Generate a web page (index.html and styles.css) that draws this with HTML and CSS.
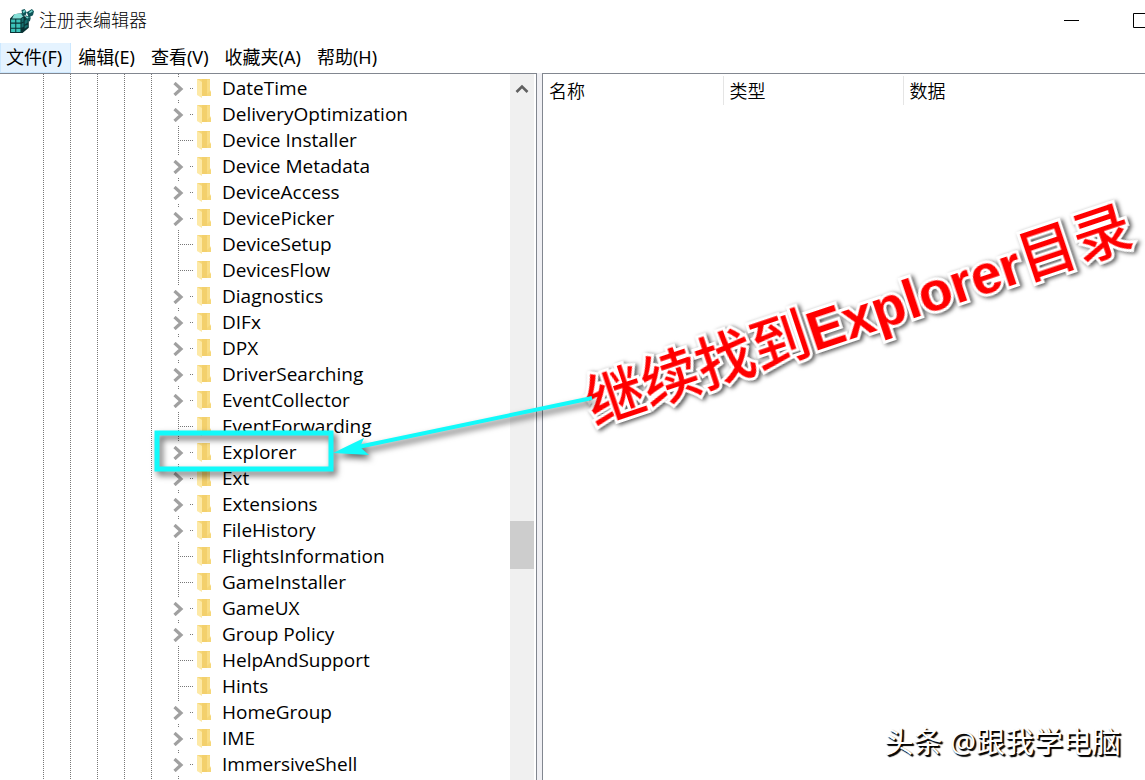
FILE: index.html
```html
<!DOCTYPE html>
<html lang="zh-CN">
<head>
<meta charset="utf-8">
<title>注册表编辑器</title>
<link rel="stylesheet" href="styles.css">
</head>
<body>
<svg class="defs" aria-hidden="true">
  <symbol id="chevron" viewBox="0 0 12 14"><path d="M1.500 1L8 7 1.500 13" fill="none" stroke="#a0a0a0" stroke-width="3.200"/></symbol>
  <symbol id="folder" viewBox="0 0 16 20">
    <path d="M1 1h13v11l1 2v4H5z" fill="#f6d778"/>
    <path d="M6 1h5v17H6z" fill="#f3d06c"/>
    <path d="M11 2h3v11l-3 3z" fill="#f9dd86"/>
    <path d="M1 1l5 3v16l-5-3z" fill="#fde9a6"/>
  </symbol>
</svg>
<div class="window">
  <header class="titlebar">
    <svg class="app-icon" viewBox="0 0 24 24" aria-hidden="true">
      <path d="M1 10l4-4 7-1 3 3 4 2v9l-6 5H1z" fill="#0a3335"/>
      <path d="M5 6l6-1 3 3-3 2H3z" fill="#86e0d8"/>
      <path d="M2 11h4v3H2zM7 11h4v3H7zM2 15h4v4H2zM7 15h4v4H7zM2 20h4v3H2zM7 20h4v3H7z" fill="#3cc4ba"/>
      <path d="M12 10l2-1v4l-2 1zM15 12l3-1v3l-3 2zM12 15l2-1v4l-2 1zM15 17l3-1v2l-3 2z" fill="#17706f"/>
      <path d="M12 2l3-1 2 3-1 3-3 1zM17 4l5-3 2 2-1 4-4 2zM16 7l5 2-1 4-4-2z" fill="#0f5558"/>
      <path d="M13 3l2-1 1 1-2 2zM19 4l3-2 1 1-3 2zM17 8l2 1-1 1-2-1z" fill="#6fd0c8"/>
    </svg>
    <h1 class="title">注册表编辑器</h1>
    <div class="window-buttons">
      <button class="window-button" aria-label="最小化"><svg width="16" height="16"><path d="M0 8.500h15" stroke="#000"/></svg></button>
      <button class="window-button" aria-label="最大化"><svg width="16" height="16"><path d="M.5 1.500h14v14H.5z" fill="none" stroke="#000"/></svg></button>
    </div>
  </header>
  <nav class="menubar">
    <button class="menu active">文件(F)</button>
    <button class="menu">编辑(E)</button>
    <button class="menu">查看(V)</button>
    <button class="menu">收藏夹(A)</button>
    <button class="menu">帮助(H)</button>
  </nav>
  <main class="panes">
    <section class="tree-pane">
      <ul class="tree" id="tree"></ul>
      <div class="scrollbar">
        <button class="scroll-up" aria-label="向上滚动"><svg width="14" height="10"><path d="M1.500 8L7 2.500 12.500 8" fill="none" stroke="#606060" stroke-width="2.600"/></svg></button>
        <div class="space-above"></div>
        <div class="thumb"></div>
        <div class="space-below"></div>
      </div>
    </section>
    <div class="splitter"></div>
    <section class="value-pane">
      <table class="values">
        <thead><tr><th class="fixed">名称</th><th class="fixed">类型</th><th>数据</th></tr></thead>
      </table>
    </section>
  </main>
  <p class="caption">继续找到<b>Explorer</b>目录</p>
  <svg class="marks" viewBox="0 0 460 90" aria-hidden="true">
    <rect x="7" y="43" width="174" height="36" fill="none" stroke="#12fafa" stroke-width="5"/>
    <path d="M208 57L442 8" stroke="#12fafa" stroke-width="4"/>
    <path d="M183 63L214 48 210 57 219 65z" fill="#12fafa"/>
  </svg>
  <p class="watermark">头条 @跟我学电脑</p>
</div>
<script src="tree.js"></script>
</body>
</html>
```
FILE: styles.css
```css
* { box-sizing: border-box; }
body, h1, p, ul { margin: 0; padding: 0; }
body {
  font-family: "Open Sans", "Noto Sans CJK SC", sans-serif;
  font-size: 18px;
  color: #000;
  background: #fff;
}
button {
  font: inherit;
  color: inherit;
  background: none;
  border: 0;
  padding: 0;
}
.defs { position: absolute; width: 0; height: 0; }
.window {
  position: relative;
  display: flex;
  flex-direction: column;
  height: 100vh;
  overflow: hidden;
}
.titlebar {
  display: flex;
  align-items: center;
  flex: none;
  height: 43px;
  padding: 0 0 3px 9px;
  gap: 5px;
}
.app-icon { width: 25px; height: 25px; }
.title { font-size: 18px; font-weight: 300; line-height: 26px; color: #000; }
.window-buttons { display: flex; margin-left: auto; margin-right: -30px; }
.window-button {
  display: flex;
  align-items: center;
  justify-content: center;
  width: 69px;
  height: 40px;
}
.menubar { display: flex; flex: none; height: 30px; }
.menu {
  padding: 0 7px 0 6px;
  border: 1px solid transparent;
  border-top: 0;
  font-family: "Noto Sans", "Noto Sans CJK SC", sans-serif;
  line-height: 27px;
  white-space: nowrap;
}
.menu.active { background: #e5f3ff; border-color: #cce8ff; padding: 0 8px 0 5px; }
.menu + .menu { padding-right: 8px; }
.panes { display: flex; flex: 1; min-height: 0; }
.tree-pane {
  display: flex;
  flex: 537 1 0;
  min-width: 0;
  border-top: 1px solid #828790;
  border-right: 1px solid #828790;
}
.tree {
  flex: 1;
  min-width: 0;
  padding-top: 1px;
  overflow: hidden;
  list-style: none;
  background-image:
    repeating-linear-gradient(#777 0 1px, transparent 1px 2px),
    repeating-linear-gradient(#777 0 1px, transparent 1px 2px),
    repeating-linear-gradient(#777 0 1px, transparent 1px 2px),
    repeating-linear-gradient(#777 0 1px, transparent 1px 2px),
    repeating-linear-gradient(#777 0 1px, transparent 1px 2px),
    repeating-linear-gradient(#777 0 1px, transparent 1px 2px);
  background-size: 1px 100%;
  background-position: 43px 0, 70px 0, 97px 0, 124px 0, 151px 0, 178px 0;
  background-repeat: no-repeat;
}
.node {
  display: flex;
  align-items: center;
  height: 26px;
  padding-left: 173px;
  font-size: 19px;
  line-height: 26px;
  white-space: nowrap;
}
.expander { width: 12px; height: 22px; margin-right: 5px; background: #fff; }
.expander svg { display: block; width: 12px; height: 14px; margin-top: 2px; }
.connector {
  width: 3px;
  height: 1px;
  background: repeating-linear-gradient(90deg, #777 0 1px, transparent 1px 2px);
}
.leaf .connector { width: 15px; margin-left: 5px; }
.folder { width: 16px; height: 20px; margin: 0 10px 0 3px; }
.scrollbar {
  display: flex;
  flex-direction: column;
  width: 24px;
  margin-right: 2px;
  background: #f0f0f0;
}
.scroll-up { height: 30px; }
.scroll-up svg { display: block; margin: 0 auto; }
.space-above { flex: 417; }
.thumb { height: 48px; background: #cdcdcd; }
.space-below { flex: 211; }
.splitter { width: 5px; background: #f0f0f4; }
.value-pane {
  flex: 603 1 0;
  min-width: 0;
  border-top: 1px solid #828790;
  border-left: 1px solid #828790;
  padding-top: 2px;
}
.values { width: 100%; table-layout: fixed; border-collapse: collapse; }
.values th {
  height: 29px;
  padding: 0 0 0 6px;
  font-weight: 350;
  line-height: 28px;
  text-align: left;
}
.values .fixed { width: 180px; border-right: 1px solid #e5e5e5; }
.caption {
  position: absolute;
  left: 859px;
  top: 316px;
  font: 500 58px/70px "Liberation Sans", "Noto Sans CJK SC", sans-serif;
  white-space: nowrap;
  color: #f00;
  -webkit-text-stroke: 6px #fff;
  paint-order: stroke fill;
  filter: drop-shadow(2px 2px 2px #000a);
  transform: translate(-50%, -50%) rotate(-18.5deg);
}
.caption b { font-size: 55px; font-weight: 700; }
.marks {
  position: absolute;
  left: 150px;
  top: 390px;
  width: 460px;
  height: 90px;
  filter: drop-shadow(3px 4px 3px #0009);
}
.watermark {
  position: absolute;
  right: 24px;
  bottom: 18px;
  font-size: 29px;
  line-height: 40px;
  color: #fff;
  text-shadow: 1px 1px 1px #000, 2px 2px 1px #000;
}
```
FILE: tree.js
```js
// Keys marked with "+" have subkeys and get an expander.
const keys = [
  "+DateTime", "+DeliveryOptimization", "Device Installer", "+Device Metadata",
  "+DeviceAccess", "+DevicePicker", "DeviceSetup", "DevicesFlow", "+Diagnostics",
  "+DIFx", "+DPX", "+DriverSearching", "+EventCollector", "EventForwarding",
  "+Explorer", "+Ext", "+Extensions", "+FileHistory", "FlightsInformation",
  "GameInstaller", "+GameUX", "+Group Policy", "HelpAndSupport", "Hints",
  "+HomeGroup", "+IME", "+ImmersiveShell"
];
document.getElementById("tree").innerHTML = keys.map(key => {
  const open = key[0] === "+";
  const name = open ? key.slice(1) : key;
  const expander = open
    ? `<button class="expander" aria-label="展开 ${name}"><svg><use href="#chevron"/></svg></button>`
    : "";
  return `<li class="node${open ? "" : " leaf"}">${expander}<span class="connector"></span>` +
    `<svg class="folder"><use href="#folder"/></svg><span>${name}</span></li>`;
}).join("");
```
